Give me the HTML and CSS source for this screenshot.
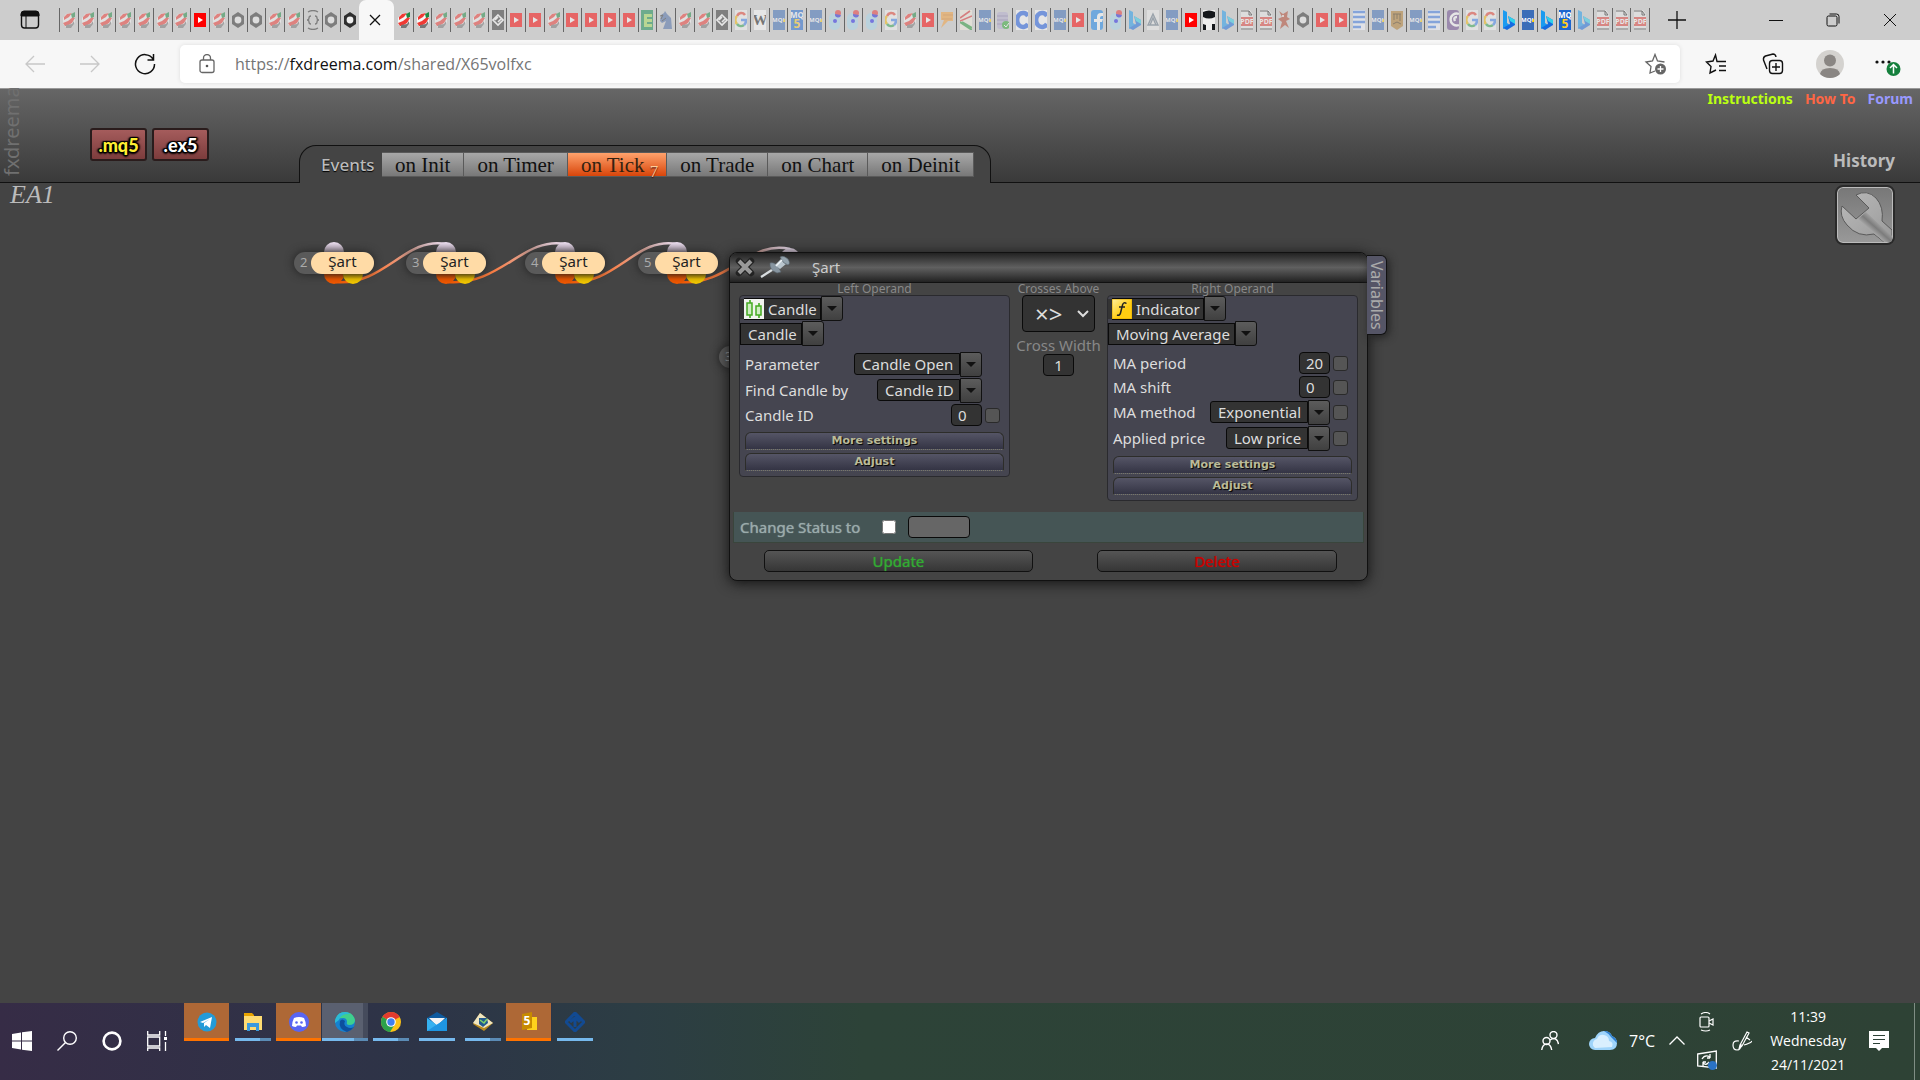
FILE: index.html
```html
<!DOCTYPE html>
<html lang="en">
<head>
<meta charset="utf-8">
<title>fxDreema - X65volfxc</title>
<link rel="stylesheet" href="styles.css">
</head>
<body>

<!-- favicons used in the tab strip -->
<svg class="sprite" aria-hidden="true">
   <symbol id="fx" viewBox="0 0 12 20">
      <path d="M3 4l5-1h4v9l-3 5H3l-3-3V8z" fill="#f6f6f6"/>
      <path d="M1 7l3-3 5-1-3 4-5 3zM0 13l5-2 5-4 2 1-3 5-5 3H2z" fill="#f03a34"/>
      <path d="M8 4l4-2v5l-3 1z" fill="#1f8a44"/>
      <path d="M3 15l6-1 2-3v3l-3 4H3z" fill="#777"/>
   </symbol>
   <symbol id="yt" viewBox="0 0 12 20"><path d="M0 3h12v14H0z" fill="#f00"/><path d="M4 7l5 3-5 3z" fill="#fff"/></symbol>
   <symbol id="hex" viewBox="0 0 12 20"><path d="M6 2l6 4v8l-6 4-6-4V6z" fill="#2f2f2f"/><circle cx="6" cy="10" r="3.4" fill="#eee"/></symbol>
   <symbol id="braces" viewBox="0 0 12 20"><path d="M1 2q5-3 10 0M1 18q5 3 10 0M4 6Q2 6 2 8t-2 2q2 0 2 2t2 2M8 6q2 0 2 2t2 2q-2 0-2 2t-2 2" fill="none" stroke="#333" stroke-width="1.3"/></symbol>
   <symbol id="gem" viewBox="0 0 12 20"><path d="M0 0h12v20H0z" fill="#333"/><path d="M6 5l5 5-5 5-5-5zM3 10l3-3M6 12l3-3" fill="none" stroke="#fff" stroke-width="1.6"/></symbol>
   <symbol id="ee" viewBox="0 0 12 20"><path d="M0 0h12v20H0z" fill="#0f8a4f"/><path d="M3 4h8v3H6v2h5v3H6v2h5v3H3z" fill="#a6e05a"/></symbol>
   <symbol id="knight" viewBox="0 0 12 20"><path d="M1 5l3-2 1-2 2 3 4 4 1 11H3l3-8-4 2-2-2z" fill="#4c6da8"/><path d="M0 6l3-1-2 4M2 11l4-3" stroke="#333" fill="none"/></symbol>
   <symbol id="goo" viewBox="0 0 12 20"><path d="M0 0h12v20H0z" fill="#f6f6f6"/><path d="M10 5A5 6 0 0 0 2 6" stroke="#ea4335" stroke-width="2.6" fill="none"/><path d="M2 6a6 6 0 0 0 0 8" stroke="#fbbc05" stroke-width="2.6" fill="none"/><path d="M2 14a5 5 0 0 0 7 1" stroke="#34a853" stroke-width="2.6" fill="none"/><path d="M9 15a6 6 0 0 0 2-5H6" stroke="#4285f4" stroke-width="2.6" fill="none"/></symbol>
   <symbol id="wiki" viewBox="0 0 12 20"><path d="M0 0h12v20H0z" fill="#fff"/><text x="6" y="15" text-anchor="middle" class="fav-serif">W</text></symbol>
   <symbol id="mql" viewBox="0 0 12 20"><path d="M0 0h12v20H0z" fill="#3b6db8"/><text x="6" y="12" text-anchor="middle" class="fav-mql">MQL</text><path d="M11 9h1v3h-2z" fill="#fc0"/></symbol>
   <symbol id="mq5" viewBox="0 0 12 20"><path d="M0 0h12v20H0z" fill="#1d66cf"/><text x="6" y="8" text-anchor="middle" class="fav-mq">MQ</text><text x="6" y="18" text-anchor="middle" class="fav-five">5</text></symbol>
   <symbol id="dots" viewBox="0 0 12 20"><rect x="0" y="3" width="11" height="17" rx="5" fill="#a9d8ee"/><circle cx="9" cy="3" r="3" fill="#e33"/><path d="M6 4a3 3 0 0 0 6 1z" fill="#22d"/><circle cx="6" cy="11" r="2" fill="#22e"/></symbol>
   <symbol id="flag" viewBox="0 0 12 20"><path d="M0 2h12v9H7l-7 7 3-8H0z" fill="#f6a03c"/><path d="M2 5h10M1 9h10" stroke="#d7812a"/></symbol>
   <symbol id="chart" viewBox="0 0 12 20"><path d="M0 0h12v20H0z" fill="#f3efe2"/><path d="M0 8l10-7M0 11l12-5" stroke="#d33" stroke-width="1.6"/><path d="M0 12l12 8M2 12l10 6" stroke="#2a9a3c" stroke-width="2"/></symbol>
   <symbol id="db" viewBox="0 0 12 20"><rect y="2" width="11" height="17" rx="3" fill="#b5aed0"/><path d="M0 6h11M0 10h11M0 14h11" stroke="#837ba8"/><circle cx="9" cy="15" r="4" fill="#2fa832"/><path d="M7 15l2 2 3-4" stroke="#fff" fill="none"/></symbol>
   <symbol id="cc" viewBox="0 0 12 20"><path d="M0 0h12v20H0z" fill="#fff"/><path d="M12 6a6 7 0 1 0 0 8" fill="none" stroke="#1f5fe8" stroke-width="4.5"/></symbol>
   <symbol id="fb" viewBox="0 0 12 20"><rect width="12" height="20" rx="3" fill="#1685ee"/><path d="M6 20v-8H3V9h3V7q0-4 4-4h2v3h-1q-2 0-2 2v1h3l-1 3H9v8z" fill="#fff"/></symbol>
   <symbol id="bing" viewBox="0 0 12 20"><path d="M0 0l4 2v11l3 2-7 4z" fill="#1b9bf0"/><path d="M5 6l7 4v5L4 20l-4-2 7-4z" fill="#156be0"/><path d="M5 6l7 4v4l-5-3z" fill="#2fd2ea"/></symbol>
   <symbol id="tri" viewBox="0 0 12 20"><path d="M0 0h12v20H0z" fill="#eee"/><path d="M6 4l5 11H1zM6 8l3 7H3z" fill="none" stroke="#68798a" stroke-width="1.4"/></symbol>
   <symbol id="gh" viewBox="0 0 12 20"><path d="M0 0h12v20H0z" fill="#eee"/><path d="M0 2q6-3 12 0v5q-6 3-12 0zM0 14l3 1v5H0zM9 14h3v6H9z" fill="#15181c"/></symbol>
   <symbol id="pdf" viewBox="0 0 12 20"><path d="M0 0h9l3 4v16H0z" fill="#eee"/><path d="M0 1h8l3 4H8V1M0 19h12" fill="none" stroke="#222"/><path d="M0 7h12v9H0z" fill="#e2413b"/><text x="6" y="14" text-anchor="middle" class="fav-pdf">PDF</text></symbol>
   <symbol id="ant" viewBox="0 0 12 20"><path d="M1 1l4 3 5-3-1 6 3 2-4 2 3 7-4-3-5 4 2-7-4-3 4-2z" fill="#b2442c"/><circle cx="5" cy="6" r="1" fill="#fff"/></symbol>
   <symbol id="doc" viewBox="0 0 12 20"><path d="M0 0h12v20H0z" fill="#f3f6ff"/><path d="M0 2h12M0 7h12M0 12h12M0 17h8" stroke="#3f7ce8" stroke-width="2.6"/></symbol>
   <symbol id="scroll" viewBox="0 0 12 20"><path d="M0 1h12v15l-6 4-6-4z" fill="#b07b2c"/><path d="M2 4h8M3 4v6M6 4v5M9 4v7M2 14l4-2 4 2" stroke="#4d320c" fill="none"/></symbol>
   <symbol id="curl" viewBox="0 0 12 20"><rect width="12" height="20" rx="3" fill="#6a478f"/><path d="M12 4a6 6 0 1 0 0 11M10 7q-4 0-2 4" fill="none" stroke="#fff" stroke-width="2.4"/></symbol>
</svg>

<div class="tabstrip">
   <button class="tab-menu" aria-label="Tab actions">
      <svg width="20" height="20" viewBox="0 0 20 20"><rect x="1.5" y="2" width="17" height="16" rx="3" fill="none" stroke="#111" stroke-width="1.4"/><path d="M1 6V4q0-3 3-3h12q3 0 3 3v2zM6 6v12" fill="#111" stroke="#111"/></svg>
   </button>
   <div class="tabs" id="tabsBefore"></div>
   <button class="tab-active" aria-label="Close tab">
      <svg width="12" height="12" viewBox="0 0 12 12"><path d="M1 1l10 10M11 1L1 11" stroke="#111" stroke-width="1.3"/></svg>
   </button>
   <div class="tabs" id="tabsAfter"></div>
   <button class="tab-new" aria-label="New tab">
      <svg width="18" height="18" viewBox="0 0 18 18"><path d="M9 0v18M0 9h18" stroke="#111" stroke-width="1.3"/></svg>
   </button>
   <div class="window-buttons">
      <button aria-label="Minimize"><svg width="14" height="14" viewBox="0 0 14 14"><path d="M0 7.500h14" stroke="#111"/></svg></button>
      <button aria-label="Restore"><svg width="14" height="14" viewBox="0 0 14 14"><rect x="1" y="3" width="10" height="10" rx="1.500" fill="none" stroke="#111"/><path d="M3.500 1h7q2.500 0 2.500 2.500v7" fill="none" stroke="#111"/></svg></button>
      <button aria-label="Close"><svg width="14" height="14" viewBox="0 0 14 14"><path d="M1 1l12 12M13 1L1 13" stroke="#111"/></svg></button>
   </div>
</div>

<div class="toolbar">
   <button class="nav-button" aria-label="Back"><svg width="20" height="18" viewBox="0 0 20 18"><path d="M20 9H1M9 1L1 9l8 8" fill="none" stroke="#c8c8c8" stroke-width="1.300"/></svg></button>
   <button class="nav-button" aria-label="Forward"><svg width="20" height="18" viewBox="0 0 20 18"><path d="M0 9h19M11 1l8 8-8 8" fill="none" stroke="#c8c8c8" stroke-width="1.300"/></svg></button>
   <button class="nav-button" aria-label="Refresh"><svg width="22" height="22" viewBox="0 0 22 22"><path d="M19 6A9.500 9.500 0 1 0 20.500 11M19.500 1v6h-6" fill="none" stroke="#111" stroke-width="1.500"/></svg></button>
   <div class="address">
      <svg width="16" height="20" viewBox="0 0 16 20"><rect x="1" y="6" width="14" height="12.500" rx="2" fill="none" stroke="#666" stroke-width="1.300"/><path d="M4.500 6V4a3.500 3.500 0 0 1 7 0v2" fill="none" stroke="#666" stroke-width="1.300"/><circle cx="8" cy="12" r="1.300" fill="#555"/></svg>
      <div class="url" role="textbox" aria-label="Address" contenteditable="true" spellcheck="false">https://<span class="domain">fxdreema.com</span>/shared/X65volfxc</div>
      <svg width="24" height="22" viewBox="0 0 24 22"><path d="M12 18l-5 2 1-6.500L3 9l6.500-1L12 1.500 14.500 8l7 1" fill="none" stroke="#666" stroke-width="1.300"/><circle cx="17.500" cy="16" r="5.500" fill="#666"/><path d="M17.500 13v6M14.500 16h6" stroke="#fff" stroke-width="1.300"/></svg>
   </div>
   <div class="toolbar-end">
      <button class="nav-button" aria-label="Favorites"><svg width="22" height="22" viewBox="0 0 22 22"><path d="M18 8.500h-6L10.500 2 8 8l-6.500 1L6 13.500 5 20l6-3M15 8.500h6M14 13h7M14 17.500h7" fill="none" stroke="#111" stroke-width="1.400"/></svg></button>
      <button class="nav-button" aria-label="Collections"><svg width="22" height="22" viewBox="0 0 22 22"><rect x="7.500" y="7.500" width="13" height="13" rx="3" fill="none" stroke="#111" stroke-width="1.400"/><path d="M14 10v8M10 14h8M5 16L1.500 7q-.5-3 2-4L11 1q2.500 0 3 3" fill="none" stroke="#111" stroke-width="1.400"/></svg></button>
      <button class="nav-button" aria-label="Profile"><svg width="28" height="28" viewBox="0 0 28 28"><circle cx="14" cy="14" r="14" fill="#d4d2cf"/><circle cx="14" cy="10.500" r="6" fill="#8a8683"/><path d="M4 24q1-6 10-6t10 6q-4 4-10 4T4 24z" fill="#8a8683"/></svg></button>
      <button class="nav-button" aria-label="Settings and more"><svg width="28" height="26" viewBox="0 0 28 26"><circle cx="4" cy="11" r="1.600" fill="#111"/><circle cx="10" cy="11" r="1.600" fill="#111"/><circle cx="16" cy="11" r="1.600" fill="#111"/><circle cx="20.500" cy="18" r="7" fill="#15803d"/><path d="M20.500 22.500v-9M17 17l3.500-3.500L24 17" fill="none" stroke="#fff" stroke-width="1.500"/></svg></button>
   </div>
</div>

<div class="page">
   <div class="header">
      <div class="brand">fxdreema</div>
      <div class="downloads">
         <button class="download mq">.mq5</button>
         <button class="download ex">.ex5</button>
      </div>
      <div class="events">
         <span class="events-title">Events</span>
         <button>on Init</button>
         <button>on Timer</button>
         <button class="current">on Tick <sub>7</sub></button>
         <button>on Trade</button>
         <button>on Chart</button>
         <button>on Deinit</button>
      </div>
      <div class="header-links">
         <div class="help">
            <a href="#" class="instructions">Instructions</a>
            <a href="#" class="howto">How To</a>
            <a href="#" class="forum">Forum</a>
         </div>
         <a href="#" class="history">History</a>
      </div>
   </div>

   <div class="canvas">
      <div class="canvas-top">
         <span class="project">EA1</span>
         <button class="tools" aria-label="Project options">
            <svg width="54" height="54" viewBox="0 0 54 54">
               <defs><linearGradient id="steel" x1="0" y1="0" x2="1" y2="1"><stop offset="0" stop-color="#b8b8b8"/><stop offset=".5" stop-color="#aaa"/><stop offset="1" stop-color="#999"/></linearGradient>
               <linearGradient id="shaft" x1="0" y1="1" x2="1" y2="0"><stop offset=".3" stop-color="#c4c4c4"/><stop offset=".5" stop-color="#7c7c7c"/><stop offset=".7" stop-color="#bbb"/></linearGradient></defs>
               <path d="M4 18L18 31 31 20 18 7Q29 1 38 10q8 9 6 23l10 9v12h-8L36 46Q20 50 9 37 1 28 4 18z" fill="url(#steel)" stroke="#5a5a5a"/>
               <path d="M20 31l8-7 26 24v6h-8z" fill="url(#shaft)"/>
            </svg>
         </button>
      </div>

      <svg class="wires" aria-hidden="true">
         <defs>
            <linearGradient id="wire" x1="0" y1="0" x2="1" y2="0"><stop offset="0" stop-color="#f25800"/><stop offset=".4" stop-color="#f87f48"/><stop offset=".8" stop-color="#d8b8bc"/><stop offset="1" stop-color="#f0e2f4"/></linearGradient>
            <linearGradient id="inDot" x1="0" y1="0" x2="0" y2="1"><stop offset="0" stop-color="#f0e2f4"/><stop offset=".55" stop-color="#a99bab"/></linearGradient>
            <linearGradient id="orangeDot" x1="0" y1="0" x2="0" y2="1"><stop offset=".5" stop-color="#b84300"/><stop offset=".75" stop-color="#f25800"/></linearGradient>
            <linearGradient id="yellowDot" x1="0" y1="0" x2="0" y2="1"><stop offset=".5" stop-color="#aa8400"/><stop offset=".75" stop-color="#f4c800"/></linearGradient>
            <g id="plugs">
               <circle cx="0" cy="0" r="10" fill="url(#inDot)"/>
               <circle cx="0" cy="22" r="10" fill="url(#orangeDot)"/>
               <circle cx="19" cy="22" r="10" fill="url(#yellowDot)"/>
            </g>
         </defs>
         <g fill="none" stroke="url(#wire)" stroke-width="2.500">
            <path d="M336 99C384 103 406 53 446 61"/>
            <path d="M448 99C500 103 524 53 565 61"/>
            <path d="M567 99C616 103 636 53 677 61"/>
            <path d="M679 99C730 103 750 56 790 66"/>
         </g>
         <use href="#plugs" x="334" y="69"/>
         <use href="#plugs" x="446" y="69"/>
         <use href="#plugs" x="565" y="69"/>
         <use href="#plugs" x="677" y="69"/>
         <use href="#plugs" x="790" y="75"/>
      </svg>
      <div class="node node2"><span class="num">2</span><span class="name">Şart</span></div>
      <div class="node node3"><span class="num">3</span><span class="name">Şart</span></div>
      <div class="node node4"><span class="num">4</span><span class="name">Şart</span></div>
      <div class="node node5"><span class="num">5</span><span class="name">Şart</span></div>
      <div class="node node30"><span class="num">3</span></div>

      <form class="dialog">
         <div class="titlebar">
            <button type="button" aria-label="Close"><svg width="20" height="20" viewBox="0 0 20 20"><path d="M4 4l12 12M16 4L4 16" stroke="#222" stroke-width="6.500" stroke-linecap="round"/><path d="M4 4l12 12M16 4L4 16" stroke="#999" stroke-width="4"/></svg></button>
            <button type="button" aria-label="Pin"><svg width="30" height="22" viewBox="0 0 30 22"><path d="M1 21L15 12" stroke="#d8dde0" stroke-width="2.200"/><path d="M10 7q6-2 11 9l-4 1q-8-3-7-10z" fill="#8795a0" stroke="#59646d" stroke-width=".6"/><path d="M15 9l6-6 5 5-6 5z" fill="#b9c5cd"/><path d="M20 1q4-2 8 2 3 5 0 6-5-1-8-8z" fill="#94a3ad" stroke="#56616a" stroke-width=".6"/><path d="M16 10l6-6" stroke="#eef3f6" stroke-width="1.500"/></svg></button>
            <span class="dialog-title">Şart</span>
         </div>

         <div class="operands">
            <div class="operand">
               <h4>Left Operand</h4>
               <div class="panel">
                  <div class="combo square">
                     <svg width="20" height="20" viewBox="0 0 20 20"><path d="M0 0h20v20H0z" fill="#f1f3ef"/><path d="M6 1v18M15 4v15" stroke="#4a2" stroke-width="1.600"/><path d="M3 4h5v12H3zM12 7h5v9h-5z" fill="#cfeec2" stroke="#4a2" stroke-width="1.500"/></svg>
                     <select class="after-icon" aria-label="Left operand type"><option>Candle</option></select><span class="arrow"></span>
                  </div>
                  <div class="combo square"><select aria-label="Left operand source"><option>Candle</option></select><span class="arrow"></span></div>
                  <div class="fields">
                     <div class="field tall"><label for="parameter">Parameter</label><span class="combo"><select id="parameter"><option>Candle Open</option></select><span class="arrow"></span></span><span class="slot"></span></div>
                     <div class="field tall"><label for="findby">Find Candle by</label><span class="combo"><select id="findby"><option>Candle ID</option></select><span class="arrow"></span></span><span class="slot"></span></div>
                     <div class="field"><label for="candleid">Candle ID</label><input type="text" id="candleid" value="0"><input type="checkbox" class="tick" aria-label="Candle ID as variable"></div>
                  </div>
                  <button type="button" class="bar-button">More settings</button>
                  <button type="button" class="bar-button">Adjust</button>
               </div>
            </div>

            <div class="operand middle">
               <h4>Crosses Above</h4>
               <button type="button" class="cross">×&gt;<svg width="12" height="8" viewBox="0 0 12 8"><path d="M1 1l5 5 5-5" fill="none" stroke="#ddd" stroke-width="2"/></svg></button>
               <label for="crosswidth">Cross Width</label>
               <input type="text" id="crosswidth" value="1">
            </div>

            <div class="operand">
               <h4>Right Operand</h4>
               <div class="panel">
                  <div class="combo square">
                     <svg width="20" height="20" viewBox="0 0 20 20"><defs><linearGradient id="gold" x1="0" y1="0" x2="1" y2="1"><stop offset="0" stop-color="#fff0a0"/><stop offset=".6" stop-color="#fc1"/></linearGradient></defs><path d="M0 0h20v20H0z" fill="url(#gold)" stroke="#e0a800"/><path d="M14.500 4.500q-3-2-4 1.500L8.500 14q-.8 3-3.500 2M7 8h6" fill="none" stroke="#222" stroke-width="1.500"/></svg>
                     <select class="after-icon" aria-label="Right operand type"><option>Indicator</option></select><span class="arrow"></span>
                  </div>
                  <div class="combo square"><select aria-label="Indicator"><option>Moving Average</option></select><span class="arrow"></span></div>
                  <div class="fields">
                     <div class="field"><label for="period">MA period</label><input type="text" id="period" value="20"><input type="checkbox" class="tick" aria-label="MA period as variable"></div>
                     <div class="field"><label for="shift">MA shift</label><input type="text" id="shift" value="0"><input type="checkbox" class="tick" aria-label="MA shift as variable"></div>
                     <div class="field tall"><label for="method">MA method</label><span class="combo"><select id="method"><option>Exponential</option></select><span class="arrow"></span></span><input type="checkbox" class="tick" aria-label="MA method as variable"></div>
                     <div class="field tall"><label for="price">Applied price</label><span class="combo"><select id="price"><option>Low price</option></select><span class="arrow"></span></span><input type="checkbox" class="tick" aria-label="Applied price as variable"></div>
                  </div>
                  <button type="button" class="bar-button">More settings</button>
                  <button type="button" class="bar-button">Adjust</button>
               </div>
            </div>
         </div>

         <div class="status">
            <label for="status">Change Status to</label>
            <input type="checkbox" id="status">
            <input type="text" class="status-value" aria-label="Status">
         </div>
         <div class="actions">
            <button type="button" class="update">Update</button>
            <button type="button" class="delete">Delete</button>
         </div>
         <button type="button" class="variables">Variables</button>
      </form>
   </div>
</div>

<div class="taskbar">
   <div class="system">
      <button aria-label="Start"><svg width="20" height="20" viewBox="0 0 20 20"><path d="M0 3l9-1.500V9.500H0zM10 1.300L20 0v9.500H10zM0 10.500h9v8L0 17zM10 10.500h10V20l-10-1.300z" fill="#fff"/></svg></button>
      <button aria-label="Search"><svg width="20" height="20" viewBox="0 0 20 20"><circle cx="13" cy="7" r="6.300" fill="none" stroke="#fff" stroke-width="1.400"/><path d="M8.500 11.500L.5 19.500" stroke="#fff" stroke-width="1.400"/></svg></button>
      <button aria-label="Cortana"><svg width="20" height="20" viewBox="0 0 20 20"><circle cx="10" cy="10" r="8.400" fill="none" stroke="#fff" stroke-width="2.600"/></svg></button>
      <button aria-label="Task View"><svg width="20" height="20" viewBox="0 0 20 20"><path d="M.7 0v4h12V0M.7 6h12v9H.7zM.7 20v-3h12v3M18.500 0v5M18.500 11v9" fill="none" stroke="#fff" stroke-width="1.300"/><path d="M17 6h3v3h-3z" fill="#fff"/></svg></button>
   </div>
   <div class="apps">
      <button class="alert" aria-label="Telegram"><svg width="20" height="20" viewBox="0 0 20 20"><circle cx="10" cy="10" r="9.500" fill="#239bd8"/><path d="M3 10l12-5-2 11-4-3-2 2v-4l6-4-7 4z" fill="#fff"/></svg></button>
      <button class="split" aria-label="File Explorer"><svg width="20" height="20" viewBox="0 0 20 20"><path d="M1 1h8l2 2v4H1z" fill="#e8a300"/><path d="M1 4h18v14H1z" fill="#ffdc72"/><path d="M4 19v-8h12v8h-3v-4H7v4z" fill="#3b9ade"/></svg></button>
      <button class="alert" aria-label="Discord"><svg width="20" height="20" viewBox="0 0 20 20"><circle cx="10" cy="10" r="10" fill="#5865f2"/><path d="M5 6q5-2 10 0 2 4 2 8-2 1-4 1l-1-1.500H8L7 15q-2 0-4-1 0-4 2-8z" fill="#fff"/><circle cx="7.500" cy="10.500" r="1.300" fill="#5865f2"/><circle cx="12.500" cy="10.500" r="1.300" fill="#5865f2"/></svg></button>
      <button class="open split" aria-label="Microsoft Edge"><svg width="20" height="20" viewBox="0 0 20 20"><circle cx="10" cy="10" r="10" fill="#1582d0"/><path d="M0 9Q2 0 10 0t10 8q0 5-6 5-3 0-2-3 0-4-4-4Q3 6 0 9z" fill="#3fcf8e"/><path d="M0 9Q2 0 10 0q3 0 5 2-9-1-11 6l-4 3z" fill="#2cb9d8"/><path d="M5 9q-2 8 7 11 4-1 7-5-4 2-7 0-4-2-2-6-3-3-5 0z" fill="#0c4f9e"/></svg></button>
      <button class="split" aria-label="Chrome"><svg width="20" height="20" viewBox="0 0 20 20"><circle cx="10" cy="10" r="10" fill="#fbc116"/><path d="M10 10L1.500 4.800A10 10 0 0 1 18.700 5z" fill="#e33b2e"/><path d="M10 10L1.500 4.800A10 10 0 0 0 9 20l5-8z" fill="#2ba24c"/><circle cx="10" cy="10" r="4.800" fill="#fff"/><circle cx="10" cy="10" r="3.700" fill="#3f7ff0"/></svg></button>
      <button aria-label="Mail"><svg width="20" height="20" viewBox="0 0 20 20"><path d="M0 6l10-6 10 6v7H0z" fill="#0f5a9e"/><path d="M2 6h16l-8 8z" fill="#f4f4f4"/><path d="M0 6l10 7 10-7v13H0z" fill="#35b1f1"/><path d="M20 6v13H0z" fill="#1e95e2"/></svg></button>
      <button class="split" aria-label="MetaTrader"><svg width="20" height="20" viewBox="0 0 20 20"><path d="M7 1l13 10-9 8L0 12z" fill="#b88a1e"/><path d="M7 1l13 10-9 5L0 11z" fill="#f0e6c0"/><path d="M6 6l8 0 1 5-5 4-4-3z" fill="#225a8e"/><path d="M7 8l4 3 3-4" stroke="#7fd36a" stroke-width="1.500" fill="none"/></svg></button>
      <button class="alert" aria-label="MetaTrader 5"><svg width="20" height="20" viewBox="0 0 20 20"><path d="M8 5h10v13H8z" fill="#ffd21c"/><path d="M3 2l10-2v16L3 18z" fill="#c78b00"/><text x="8" y="13" text-anchor="middle" class="five">5</text></svg></button>
      <button aria-label="MetaEditor"><svg width="20" height="20" viewBox="0 0 20 20"><path d="M10 1l9 9-9 9-9-9zM10 5l5 5M5 10l5-4v9" fill="none" stroke="#124a92" stroke-width="3"/></svg></button>
   </div>
   <div class="tray">
      <button class="people" aria-label="People"><svg width="18" height="20" viewBox="0 0 18 20"><g fill="none" stroke="#fff" stroke-width="1.400"><circle cx="12.500" cy="4" r="3.500"/><circle cx="5.500" cy="10" r="3.500"/><path d="M9 9q7-4 8.500 4M.7 19q1-6 5-6t5 6"/></g></svg></button>
      <button class="weather"><svg width="28" height="20" viewBox="0 0 28 20"><path d="M6 19a6 6 0 0 1 0-12Q9 0 15 0q6 0 8 5 5 2 5 7 0 7-7 7z" fill="#9fd4fa"/><path d="M15 0q6 0 8 5 5 2 5 7l-6-6q-3-4-7-6z" fill="#2f7fd0"/><path d="M6 17a5 5 0 0 1 2-9q2-5 7-4 5 1 5 6 5 1 3 6z" fill="#d9effe"/></svg>7°C</button>
      <button class="chevron" aria-label="Show hidden icons"><svg width="16" height="9" viewBox="0 0 16 9"><path d="M.5 8.500L8 1l7.500 7.500" fill="none" stroke="#fff" stroke-width="1.300"/></svg></button>
      <div class="stack">
         <button aria-label="Meet Now"><svg width="16" height="20" viewBox="0 0 16 20"><g fill="none" stroke="#fff" stroke-width="1.200"><rect x="1" y="5" width="9" height="10" rx="1"/><path d="M10 9l4-2v6l-4-2M2 2q5-3 9 0M2 18q5 2 9 0"/></g></svg></button>
         <button aria-label="Windows Update"><svg width="20" height="20" viewBox="0 0 20 20"><path d="M0.700 4L19.300 1v17L.7 16z" fill="none" stroke="#fff" stroke-width="1.300"/><path d="M5 9q3-5 8-2V4M13 8h-3M12 12q-3 4-6 1v3M6 12h3" fill="none" stroke="#fff" stroke-width="1.300"/><circle cx="15.500" cy="15.500" r="4.500" fill="#2a72c4"/></svg></button>
      </div>
      <button class="pen" aria-label="Windows Ink"><svg width="20" height="20" viewBox="0 0 20 20"><g fill="none" stroke="#fff" stroke-width="1.200"><path d="M8 14L15 1l2 1-7 13-3 3zM7 10q-6-1-6 4t4 5 4-6M12 14q7-2 8-4M14 6l4 3"/></g></svg></button>
      <button class="clock"><span>11:39</span><span>Wednesday</span><span>24/11/2021</span></button>
      <button class="notes" aria-label="Notifications"><svg width="20" height="20" viewBox="0 0 20 20"><path d="M0 0h20v17h-7l-3 3-3-3H0z" fill="#fff"/><path d="M4 4.500h12M4 8.500h12M4 12.500h7" stroke="#2d4237" stroke-width="1.200"/></svg></button>
   </div>
</div>

<script src="tabs.js"></script>
</body>
</html>
```

FILE: styles.css
```css
* {box-sizing: border-box}

html, body {height: 100%}
body       {margin: 0; display: flex; flex-direction: column; overflow: hidden;
            background: #444; color: #ddd;
            font: 15px/20px "Noto Sans", sans-serif}
button     {font: inherit; color: inherit; background: none; border: 0; padding: 0; margin: 0;
            cursor: pointer}
input, select {font: inherit; color: inherit; margin: 0}
a          {text-decoration: none}
svg        {display: block; flex: none}
.sprite    {display: none}

/* browser tabs */
.tabstrip   {display: flex; align-items: center; height: 40px; flex: none;
             background: #cdcdcd; padding-left: 20px}
.tab-menu   {width: 39px}
.tabs       {display: flex; height: 24px}
#tabsBefore {flex: 300 1 0; max-width: 300px}
#tabsAfter  {flex: 1256 1 0; max-width: 1256px; border-right: 1px solid #666}
.tab        {flex: 1 1 0; min-width: 0; border-left: 1px solid #666;
             display: flex; align-items: center; justify-content: center}
#tabsAfter .tab:first-child {border-color: transparent}
.tab.idle svg {opacity: 0.5}
.tab-active {width: 35px; height: 40px; background: #f7f7f7; border-radius: 7px 7px 0 0;
             display: flex; align-items: center; justify-content: center; padding-right: 4px}
.tab-new    {margin-left: 18px}
.window-buttons {margin-left: auto; display: flex; padding-right: 2px}
.window-buttons button {width: 57px; height: 40px; display: flex; align-items: center;
                        justify-content: center}

.fav-serif {font: bold 15px "Liberation Serif", serif; fill: #222}
.fav-mql   {font: bold 6px "Open Sans", sans-serif; fill: #fff}
.fav-mq    {font: bold 8px "Open Sans", sans-serif; fill: #fff}
.fav-five  {font: bold 12px "Open Sans", sans-serif; fill: #fc2}
.fav-pdf   {font: bold 7px "Open Sans", sans-serif; fill: #fff}
.five      {font: bold 12px "Open Sans", sans-serif; fill: #fff}

/* browser toolbar */
.toolbar    {display: flex; align-items: center; height: 49px; flex: none; padding-left: 7px;
             background: #f7f7f7; border-bottom: 1px solid #999}
.nav-button {width: 55px; height: 40px; display: flex; align-items: center;
             justify-content: center}
.address    {flex: 1; display: flex; align-items: center; height: 38px; margin-left: 8px;
             padding: 0 13px 0 19px; background: #fff; border-radius: 5px;
             box-shadow: 0 0 4px #ddd}
.url        {flex: 1; margin-left: 20px; color: #757575; outline: 0;
             font: 16px/24px "Open Sans", sans-serif}
.domain     {color: #111}
.toolbar-end {display: flex; padding: 0 5px 0 7px}
.toolbar-end .nav-button {width: 57px}

/* page header */
.page      {flex: 1; min-height: 0; display: flex; flex-direction: column}
.header    {display: flex; align-items: flex-end; height: 94px; flex: none;
            background: linear-gradient(#666, #3a3a3a); border-bottom: 1px solid #111}
.brand     {width: 24px; height: 92px; writing-mode: vertical-rl; transform: rotate(180deg);
            padding-top: 6px; line-height: 24px; font-size: 20px; color: #707070}
.downloads {display: flex; gap: 5px; margin: 0 0 21px 66px}
.download  {width: 57px; height: 33px; border: 2px solid #2a1c1c; border-radius: 3px;
            background: linear-gradient(#a55c5c, #7c3c3c);
            font: 900 18px/28px Lato, sans-serif;
            text-shadow: 1px 1px 1px #000, -1px 1px 1px #000, 1px -1px 1px #000,
                         -1px -1px 1px #000, 0 2px 2px #000, 2px 0 2px #000, -2px 0 2px #000}
.mq        {color: #fe3}
.ex        {color: #fff}

.events    {display: flex; align-items: center; height: 38px; margin: 0 0 -1px 90px;
            padding: 0 16px 0 21px; background: #444;
            border: 1px solid #111; border-bottom: 0; border-radius: 17px 17px 0 0}
.events-title {width: 61px; font-size: 17px; font-weight: 500; color: #bbb;
               text-shadow: 0 1px 1px #000}
.events button {height: 25px; padding: 0 13px; color: #111; background: linear-gradient(#a8a8a8, #787878);
                border: 1px solid #5a5a5a; border-left-width: 0;
                font: 21px/22px "Liberation Serif", serif}
.events .current {background: linear-gradient(#ffa26c, #d8450a); padding-right: 8px; color: #321}
.events sub {font-size: 17px; line-height: 0; vertical-align: -5px; color: #fc9; text-shadow: 0 1px 1px #400}

.header-links {margin-left: auto; align-self: stretch; display: flex; flex-direction: column;
               justify-content: space-between; align-items: flex-end; padding: 0 7px 11px 0}
.help      {display: flex; gap: 12px; font-weight: 700; font-size: 14px}
.instructions {color: #bf1}
.howto     {color: #f64}
.forum     {color: #99f}
.history   {margin-right: 18px; font-size: 17px; font-weight: 700; color: #bbb}

/* block canvas */
.canvas     {position: relative; flex: 1; overflow: hidden}
.canvas-top {display: flex; justify-content: space-between; align-items: flex-start;
             padding: 2px 25px 0 10px}
.project    {font: italic 26px/20px "Liberation Serif", serif; color: #bbb}
.tools      {width: 60px; height: 60px; border: 2px solid #2a2a2a; border-radius: 8px;
             background: linear-gradient(#777, #999); box-shadow: inset 0 0 0 1px #bbb;
             padding: 1px; overflow: hidden}
.wires      {position: absolute; left: 0; top: 0; width: 100%; height: 200px}

.node      {position: absolute; top: 69px; height: 22px; display: flex; border-radius: 11px;
            background: #5a5a5a; box-shadow: 0 0 10px #222; line-height: 20px}
.num       {width: 17px; padding-left: 6px; font-size: 13px; color: #aaa}
.name      {width: 63px; border-radius: 11px; background: #ffdba6; color: #222;
            text-align: center; line-height: 19px}
.node2     {left: 294px}
.node3     {left: 406px}
.node4     {left: 525px}
.node5     {left: 638px}
.node30    {left: 719px; top: 163px; width: 80px}

/* condition dialog */
.dialog    {position: absolute; left: 729px; top: 69px; background: #444;
            border: 1px solid #111; border-radius: 8px; box-shadow: 0 2px 14px #111;
            padding-bottom: 8px}
.titlebar  {display: flex; align-items: center; height: 30px; gap: 5px; padding: 0 0 2px 5px;
            border-bottom: 1px solid #111; border-radius: 7px 7px 0 0;
            background: linear-gradient(#222, #606060 50%, #222)}
.dialog-title {margin-left: 17px; color: #ccc}

.operands   {display: grid; grid-template-columns: 271px 97px 251px; padding: 0 9px}
.operand h4 {margin: 0; font: 12px/12px "Noto Sans", sans-serif; color: #888; text-align: center;
             white-space: nowrap}
.panel      {background: #454550; border: 1px solid #2a2a2e; border-radius: 4px; padding: 0 0 5px}

.combo      {display: flex; align-items: center; width: max-content}
.combo select {appearance: none; height: 22px; padding: 0 5px 0 7px; background: #333; color: #ddd;
               border: 1px solid #0a0a0a; border-radius: 3px 0 0 3px; line-height: 20px}
.combo.square {height: 25px}
.combo.square select {border-radius: 0; padding-right: 4px}
.combo.square > svg {box-shadow: -4px 0 #333, 0 -1px #0a0a0a, 0 1px #0a0a0a; margin-left: 4px}
.combo select.after-icon {border-left: 0; padding: 0 3px 0 4px}
.arrow      {width: 22px; height: 25px; border: 1px solid #111; border-radius: 0 3px 3px 0;
             background: linear-gradient(#5c5c5c, #404040);
             display: flex; align-items: center; justify-content: center}
.arrow::after {content: ""; border: 5px solid transparent; border-top-color: #111;
               border-bottom: 0}

.fields     {padding: 5px 9px 5px 5px}
.field      {display: flex; align-items: center; height: 24px}
.field.tall {height: 26px}
.field label {margin-right: auto; line-height: 20px}
.slot       {width: 15px; margin-left: 3px}
.field input[type=text] {width: 31px; height: 22px; padding: 0 6px; background: #333;
                         border: 1px solid #0a0a0a; border-radius: 4px}
.tick       {appearance: none; width: 15px; height: 15px; margin-left: 3px; background: #555;
             border: 1px solid #2a2a2a; border-radius: 3px}

.bar-button {display: block; width: calc(100% - 10px); height: 18px; margin: 0 5px 3px;
             color: #bb9; border: 1px solid #2d2d2a; border-bottom: 1px dotted #776;
             border-radius: 6px 6px 0 0; background: linear-gradient(#555566, #343444);
             font: bold 11px/16px "DejaVu Sans", sans-serif; text-shadow: 1px 1px 1px #000}
.bar-button:last-child {margin-bottom: 0}

.middle     {display: flex; flex-direction: column; align-items: center; color: #888}
.cross      {display: flex; align-items: center; justify-content: space-between; width: 73px;
             height: 37px; padding: 0 5px 0 12px; background: #333; color: #ddd;
             border: 1px solid #0a0a0a; border-radius: 4px; font-size: 24px}
.middle label {margin: 3px 0 -1px; white-space: nowrap}
.middle input {width: 31px; height: 22px; text-align: center; color: #ddd;
               padding: 0; background: #333; border: 1px solid #0a0a0a; border-radius: 4px}

.status     {display: flex; align-items: center; height: 31px; margin: 11px 3px 0; padding-left: 6px;
             background: #455555; border: 1px solid #3a453c; border-top: 0; color: #9aabab;
             text-shadow: 0 0 1px #9aabab}
.status input[type=checkbox] {width: 14px; height: 14px; margin: 0 12px 0 22px}
.status-value {width: 62px; height: 22px; background: #666; border: 1px solid #0a0a0a;
               border-radius: 4px}
.actions    {display: flex; gap: 64px; padding: 7px 30px 0 34px}
.actions button {height: 22px; border: 1px solid #111; border-radius: 5px; line-height: 20px;
                 background: linear-gradient(#555, #363636)}
.actions .update {flex: 269 1 0; color: #3a3; text-shadow: 0 0 1px #3a3}
.actions .delete {flex: 240 1 0; color: #c00; text-shadow: 0 0 1px #c00}
.variables  {position: absolute; left: 100%; top: 2px; height: 80px; width: 20px;
             writing-mode: vertical-rl; line-height: 18px; font-size: 16px; color: #aaa;
             background: #556; border: 1px solid #111; border-left: 0; border-radius: 0 6px 6px 0;
             box-shadow: 2px 2px 8px #222}

/* taskbar */
.taskbar   {display: flex; height: 77px; flex: none; color: #fff;
            background: linear-gradient(90deg, #362c46, #2d3447 22%, #2c3d44 33%, #2d4338 45%, #2e4235);
            font: 14px/24px "Open Sans", sans-serif}
.system    {display: flex; align-items: center; gap: 25px; padding: 0 17px 2px 12px}
.apps      {display: flex; align-items: flex-start}
.apps button {width: 46px; height: 38px; padding: 9px 13px; position: relative}
.apps button::after {content: ""; position: absolute; left: 5px; right: 5px; bottom: 0; height: 3px;
                     background: #76b9ed}
.apps .split::after {background: linear-gradient(90deg, #76b9ed 70%, #5b8bb5 70%)}
.apps .alert {background: #ae6836; border-right: 1px solid #2d3447}
.apps .alert::after {left: 0; right: 0; background: #ff7300}
.apps .open {background: linear-gradient(90deg, #5a6070 90%, #454b5c 90%)}
.apps .open::after {left: 0; right: 0}

.tray      {display: flex; align-items: center; margin-left: auto; margin-right: 5px;
            padding: 0 25px 2px 0; border-right: 1px solid #7f8d84}
.people    {margin-right: 30px}
.weather   {display: flex; align-items: center; gap: 12px; font-size: 16px}
.chevron   {margin-left: 14px}
.stack     {display: flex; flex-direction: column; align-items: center; gap: 18px; margin-left: 12px}
.pen       {margin-left: 15px}
.clock     {display: flex; flex-direction: column; margin-left: 18px; text-align: center}
.notes     {margin-left: 23px}
```

FILE: tabs.js
```js
// a leading "!" marks a tab that is loaded, all others are asleep
var before = "fx fx fx fx fx fx fx !yt fx hex hex fx fx braces hex !hex";
var after = "!fx !fx fx fx fx gem yt yt fx yt yt yt yt ee knight fx fx gem goo wiki mql mq5 mql " +
            "dots dots dots goo fx yt flag chart mql db cc cc mql yt fb dots bing tri mql !yt !gh " +
            "bing pdf pdf ant hex yt yt doc mql scroll mql doc curl goo goo !bing !mql !bing !mq5 " +
            "bing pdf pdf pdf";

function fillTabs(id, list) {
   var names = list.split(" ");
   var html = "";
   for (var i = 0; i < names.length; i++) {
      var awake = names[i].charAt(0) == "!";
      var icon = names[i].replace("!", "");
      html += '<button class="tab' + (awake ? '' : ' idle') + '" aria-label="' + icon + ' tab">' +
              '<svg width="12" height="20"><use href="#' + icon + '"/></svg></button>';
   }
   document.getElementById(id).innerHTML = html;
}

fillTabs("tabsBefore", before);
fillTabs("tabsAfter", after);
```
